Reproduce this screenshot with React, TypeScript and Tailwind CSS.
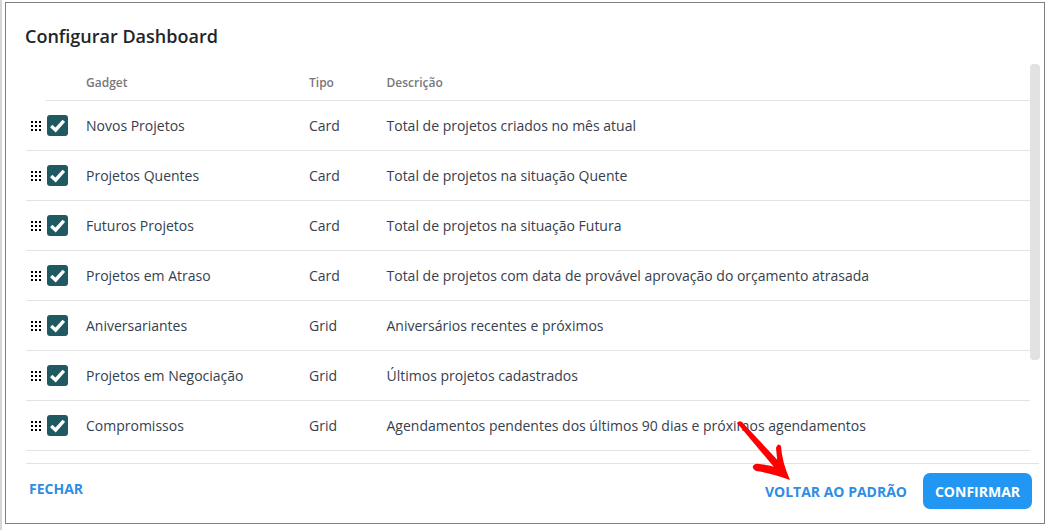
const rows = [
  ["Novos Projetos", "Card", "Total de projetos criados no mês atual"],
  ["Projetos Quentes", "Card", "Total de projetos na situação Quente"],
  ["Futuros Projetos", "Card", "Total de projetos na situação Futura"],
  ["Projetos em Atraso", "Card", "Total de projetos com data de provável aprovação do orçamento atrasada"],
  ["Aniversariantes", "Grid", "Aniversários recentes e próximos"],
  ["Projetos em Negociação", "Grid", "Últimos projetos cadastrados"],
  ["Compromissos", "Grid", "Agendamentos pendentes dos últimos 90 dias e próximos agendamentos"],
];

function Grip() {
  return (
    <svg width="10" height="10" viewBox="0 0 10 10" className="shrink-0 block">
      {[0, 4, 8].flatMap((y) =>
        [0, 4, 8].map((x) => <rect key={`${x}-${y}`} x={x} y={y} width="2" height="2" fill="#000" />)
      )}
    </svg>
  );
}

function Check() {
  return (
    <div className="w-[21px] h-[21px] rounded-[3px] bg-[#1f5a62] flex items-center justify-center shrink-0">
      <svg width="15" height="14" viewBox="0 0 15 14">
        <path d="M1.2 7 L5.6 11 L13.8 1.8" fill="none" stroke="#fff" strokeWidth="3.4" />
      </svg>
    </div>
  );
}

export default function App() {
  return (
    <div className="w-[1055px] h-[530px] bg-white flex overflow-hidden" style={{ fontFamily: '"Open Sans", sans-serif' }}>
      <div className="w-[2px] h-full bg-[#d6d6d6] shrink-0" />
      <div className="ml-[3px] mt-[2px] relative w-[1040px] h-[522px] border border-[#808080] bg-white flex flex-col">
        <h2 className="h-[61px] pl-[19px] pt-[20px] text-[18px] leading-[26px] font-semibold text-[#212529]">Configurar Dashboard</h2>
        <div className="flex-1 flex min-h-0 pl-[20px] pr-[3px]">
          <div className="w-[1004px] overflow-hidden">
            <div className="ml-[20px] h-[37px] pt-[2px] border-b border-[#e3e3e3] flex items-center text-[12px] font-semibold text-[#77777c]">
              <div className="pl-[40px] w-[263px]">Gadget</div>
              <div className="w-[77.5px]">Tipo</div>
              <div>Descrição</div>
            </div>
            {rows.map(([name, type, desc]) => (
              <div key={name} className="h-[50px] border-b border-[#e3e3e3] flex items-center text-[14px] text-[#36404e]">
                <div className="w-[60px] pl-[5px] flex items-center gap-[6px]">
                  <Grip />
                  <Check />
                </div>
                <div className="w-[223px]">{name}</div>
                <div className="w-[77.5px]">{type}</div>
                <div>{desc}</div>
              </div>
            ))}
          </div>
          <div className="w-[10px] h-[296px] rounded-[4px] bg-[#e2e2e2]" />
        </div>
        <div className="h-[60px] ml-[20px] mr-[5px] border-t border-[#e3e3e3] flex items-start">
          <button className="ml-[3px] mt-[15px] text-[14px] leading-[20px] font-bold text-[#2f8de4]">FECHAR</button>
          <div className="ml-auto flex items-center mt-[9px] mr-[7px]">
            <button className="mr-[16px] pt-[2px] text-[14px] leading-[20px] font-bold text-[#2f8de4]">VOLTAR AO PADRÃO</button>
            <button className="w-[109px] h-[36px] rounded-[7px] bg-[#2196f3] text-white text-[14px] font-bold">CONFIRMAR</button>
          </div>
        </div>
        <svg className="absolute left-[725px] top-[415px]" width="70" height="70" viewBox="0 0 70 70">
          <path
            d="M6 5 Q8 2 11 4 L53 49 L48 55 Z M22 48 Q24 45 28 46 Q38 47 47 50 Q46 40 45 30 Q47 24 50 28 Q51 44 59 62 Q40 55 25 53 Q21 51 22 48 Z"
            fill="#ff0000"
          />
        </svg>
      </div>
    </div>
  );
}
